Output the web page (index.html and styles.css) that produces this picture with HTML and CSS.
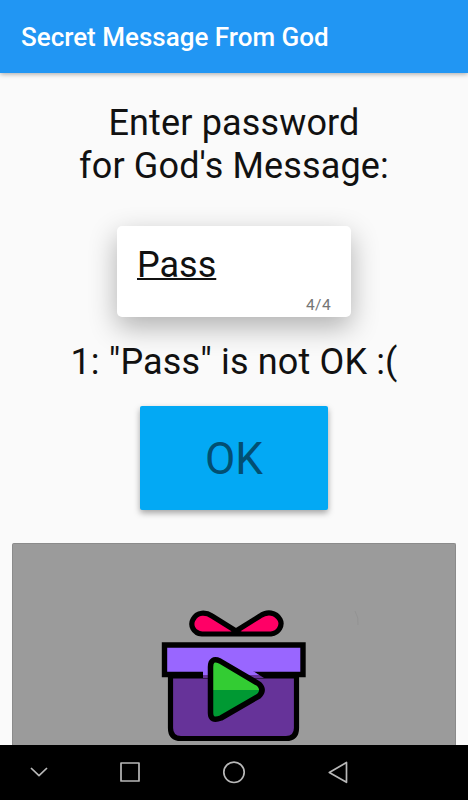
FILE: index.html
```
<!DOCTYPE html>
<html lang="en">
<head>
  <meta charset="UTF-8" />
  <meta name="viewport" content="width=device-width, initial-scale=1.0"/>
  <title>Secret Message From God</title>
  <link rel="stylesheet" href="styles.css">
</head>
<body>

  <header class="app-bar">
    <h1>Secret Message From God</h1>
  </header>

  <main class="content">
    <p class="prompt">Enter password<br>for God's Message:</p>

    <div class="field">
      <span class="value">Pass</span>
      <span class="counter">4/4</span>
    </div>

    <p class="result">1: "Pass" is not OK :(</p>

    <button class="ok">OK</button>

    <div class="gift">
      <svg width="220" height="145" viewBox="0 0 220 145">
        <!-- bow -->
        <path d="M86 34 H52 C43 33 40 25 43 19.500 C47 11.500 56 12 62 16 L86 31 L110 16 C117 11 126 12 130 19.500 C133 25 129 33 121 34 Z" fill="#ff0066" stroke="#000" stroke-width="5.200" stroke-linejoin="round"/>
        <path d="M79 33 L86 29 L94 33 Z"/>
        <!-- box and lid -->
        <path d="M20.500 76 V128 Q20.500 138.500 31 138.500 H136 Q146.500 138.500 146.500 128 V76 Z" fill="#663399" stroke="#000" stroke-width="5.200"/>
        <path d="M14.500 45 H153 V74.500 H14.500 Z" fill="#9966ff" stroke="#000" stroke-width="5.400"/>
        <path d="M53 71 H103 L114 78 H53 Z" fill="#663399"/>
        <path d="M53 71 H103 L109 75 H53 Z" fill="#9966ff"/>
        <!-- play -->
        <path d="M60.500 67 Q60.500 57 70 61 L109 84 Q115 90 109 96 L71 118 Q60.500 122 60.500 113 Z" fill="#33cc33"/>
        <path d="M60.500 90 H113 L109 96 L71 118 Q60.500 122 60.500 113 Z" fill="#009933"/>
        <path d="M60.500 67 Q60.500 57 70 61 L109 84 Q115 90 109 96 L71 118 Q60.500 122 60.500 113 Z" fill="none" stroke="#000" stroke-width="5.500" stroke-linejoin="round"/>
        <path d="M205 11 Q209 18 208 25" fill="none" stroke="#939393" stroke-width="1"/>
      </svg>
    </div>
  </main>

  <nav class="nav-bar">
    <svg width="468" height="55" viewBox="0 1 468 55" fill="none" stroke="#b8b8b8" stroke-width="1.700" stroke-linejoin="round">
      <path d="M31 24 L39 31.700 L47 24"/>
      <rect x="121" y="19" width="18" height="18"/>
      <circle cx="234" cy="28.300" r="10.200"/>
      <path d="M346.500 18.500 V38.300 L329.300 28.400 Z"/>
    </svg>
  </nav>

</body>
</html>
```

FILE: styles.css
```
* {
  box-sizing: border-box;
}

body {
  margin: 0;
  height: 800px;
  display: flex;
  flex-direction: column;
  overflow: hidden;
  font-family: Roboto, "Liberation Sans", sans-serif;
  background: #fafafa;
  color: #111;
}

h1, p {
  margin: 0;
  font-weight: 400;
}

.app-bar {
  height: 72.5px;
  flex: none;
  padding: 2px 21px 0;
  display: flex;
  align-items: center;
  background: #2196f3;
  color: #fff;
  box-shadow: 0 1px 5px rgba(0, 0, 0, 0.35);
}

.app-bar h1 {
  font-size: 26px;
  line-height: 30px;
  font-weight: 500;
}

.content {
  flex: 1;
  min-height: 0;
  display: flex;
  flex-direction: column;
  align-items: center;
  padding: 29.5px 12px 0;
}

.prompt, .result {
  font-size: 36px;
  line-height: 43px;
  letter-spacing: 0.15px;
  text-align: center;
  white-space: nowrap;
}

.field {
  width: 234px;
  height: 91px;
  flex: none;
  margin-top: 38px;
  padding: 18px 20px 0;
  display: flex;
  flex-direction: column;
  background: #fff;
  border-radius: 5px;
  box-shadow: 0 10px 28px rgba(0, 0, 0, 0.3);
}

.value {
  align-self: flex-start;
  font-size: 36px;
  line-height: 43px;
  text-decoration: underline;
  text-decoration-thickness: 1.5px;
}

.counter {
  align-self: flex-end;
  margin-top: 8px;
  font-size: 15.5px;
  letter-spacing: 0.4px;
  line-height: 20px;
  color: #757575;
}

.result {
  margin-top: 24px;
}

.ok {
  width: 188px;
  height: 104px;
  flex: none;
  margin-top: 22px;
  padding: 2px 0 0;
  border: none;
  border-radius: 2px;
  background: #03a9f4;
  color: #024f72;
  font-family: inherit;
  font-size: 44px;
  box-shadow: 0 3px 6px rgba(0, 0, 0, 0.35);
}

.gift {
  align-self: stretch;
  flex: 1;
  margin-top: 33px;
  padding: 56px 0 0 137px;
  overflow: hidden;
  background: #9b9b9b;
  border: 1px solid #8b8b8b;
  border-bottom: none;
  border-radius: 2px 2px 0 0;
}

.gift svg, .nav-bar svg {
  display: block;
}

.nav-bar {
  height: 55px;
  flex: none;
  background: #000;
}
```
